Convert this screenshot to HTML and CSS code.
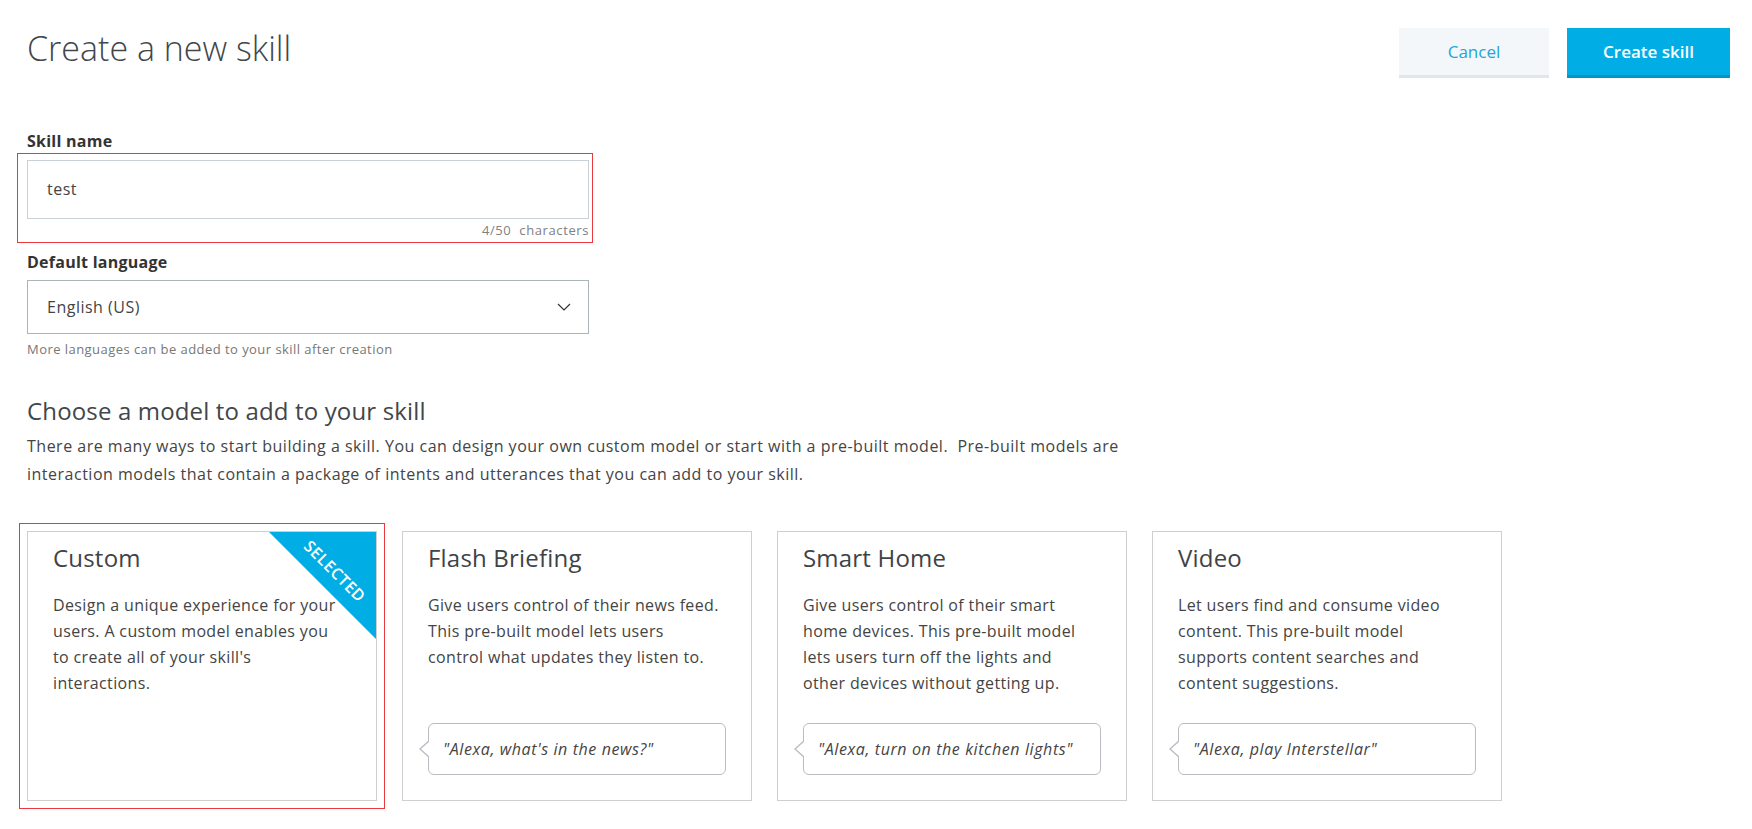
FILE: index.html
```html
<!DOCTYPE html>
<html lang="en">
<head>
<meta charset="utf-8">
<title>Create a new skill</title>
<link rel="stylesheet" href="styles.css">
</head>
<body>
<div class="page">
  <header class="top">
    <h1 class="title">Create a new skill</h1>
    <div class="actions">
      <button class="btn btn-secondary">Cancel</button>
      <button class="btn btn-primary">Create skill</button>
    </div>
  </header>

  <section class="form">
    <div class="label">Skill name</div>
    <div class="highlight">
      <div class="input">test</div>
      <div class="counter">4/50&nbsp; characters</div>
    </div>

    <div class="label label-lang">Default language</div>
    <div class="select">
      <span>English (US)</span>
      <svg class="chevron" width="14" height="8" viewBox="0 0 14 8"><polyline points="1,1 7,7 13,1" fill="none" stroke="#333" stroke-width="1.2"/></svg>
    </div>
    <p class="help">More languages can be added to your skill after creation</p>
  </section>

  <section class="models">
    <h2 class="models-title">Choose a model to add to your skill</h2>
    <p class="intro">There are many ways to start building a skill. You can design your own custom model or start with a pre-built model.&nbsp; Pre-built models are<br>interaction models that contain a package of intents and utterances that you can add to your skill.</p>

    <div class="cards">
      <div class="card card-selected">
        <div class="ribbon"><span>SELECTED</span></div>
        <h3 class="card-title">Custom</h3>
        <p class="card-desc">Design a unique experience for your<br>users. A custom model enables you<br>to create all of your skill's<br>interactions.</p>
      </div>
      <div class="card">
        <h3 class="card-title">Flash Briefing</h3>
        <p class="card-desc">Give users control of their news feed.<br>This pre-built model lets users<br>control what updates they listen to.</p>
        <div class="bubble">"Alexa, what's in the news?"</div>
      </div>
      <div class="card">
        <h3 class="card-title">Smart Home</h3>
        <p class="card-desc">Give users control of their smart<br>home devices. This pre-built model<br>lets users turn off the lights and<br>other devices without getting up.</p>
        <div class="bubble">"Alexa, turn on the kitchen lights"</div>
      </div>
      <div class="card">
        <h3 class="card-title">Video</h3>
        <p class="card-desc">Let users find and consume video<br>content. This pre-built model<br>supports content searches and<br>content suggestions.</p>
        <div class="bubble">"Alexa, play Interstellar"</div>
      </div>
    </div>
  </section>
</div>
</body>
</html>
```

FILE: styles.css
```css
* { box-sizing: border-box; }

html, body {
  margin: 0;
  padding: 0;
  background: #ffffff;
}

body {
  font-family: "Open Sans", "Noto Sans", "Liberation Sans", sans-serif;
  color: #444;
}

.page {
  padding: 28px 22px 28px 27px;
}

.top {
  display: flex;
  justify-content: space-between;
  align-items: flex-start;
  height: 50px;
}

.title {
  margin: 0;
  font-size: 34px;
  font-weight: 300;
  line-height: 40px;
  color: #424649;
}

.actions {
  display: flex;
  gap: 18px;
}

.btn {
  font-family: inherit;
  font-size: 17px;
  height: 50px;
  border: 0;
  border-bottom: 3px solid;
  padding: 0;
  cursor: pointer;
}

.btn-secondary {
  width: 150px;
  background: #f4f7f9;
  border-bottom-color: #dde7ec;
  color: #1ba6da;
  font-weight: 500;
}

.btn-primary {
  width: 163px;
  background: #00aee5;
  border-bottom-color: #0096c6;
  color: #ffffff;
  font-weight: 600;
}

/* form */
.label {
  font-size: 16px;
  font-weight: 700;
  line-height: 20px;
  letter-spacing: 0.25px;
  color: #333;
  margin-top: 53px;
}

.label-lang {
  margin-top: 9px;
}

.highlight {
  width: 576px;
  margin: 2px 0 0 -10px;
  padding: 6px 3px 3px 9px;
  border: 1px solid #e8393f;
}

.input {
  width: 562px;
  height: 59px;
  border: 1px solid #c8d0d8;
  padding: 0 19px;
  font-size: 16px;
  line-height: 57px;
  letter-spacing: 0.5px;
  color: #444;
}

.counter {
  margin-top: 2px;
  text-align: right;
  font-size: 13px;
  line-height: 18px;
  letter-spacing: 0.6px;
  color: #808080;
}

.select {
  width: 562px;
  height: 54px;
  margin-top: 8px;
  border: 1px solid #a9b6b7;
  padding: 0 17px 0 19px;
  display: flex;
  align-items: center;
  justify-content: space-between;
  font-size: 16px;
  letter-spacing: 0.5px;
  color: #444;
}

.help {
  margin: 6px 0 0;
  font-size: 13px;
  line-height: 18px;
  letter-spacing: 0.45px;
  color: #777;
}

/* models */
.models-title {
  margin: 38px 0 0;
  font-size: 24px;
  font-weight: 400;
  line-height: 30px;
  letter-spacing: 0.15px;
  color: #424649;
}

.intro {
  margin: 6px 0 0;
  font-size: 16px;
  line-height: 28px;
  letter-spacing: 0.5px;
  color: #444;
}

.cards {
  display: flex;
  gap: 25px;
  margin-top: 43px;
}

.card {
  position: relative;
  width: 350px;
  height: 270px;
  border: 1px solid #cfcfcf;
  padding: 11px 25px 25px;
  display: flex;
  flex-direction: column;
  background: #fff;
}

.card-selected {
  outline: 1px solid #e8393f;
  outline-offset: 7px;
}

.card-title {
  margin: 0;
  font-size: 24px;
  font-weight: 400;
  line-height: 30px;
  letter-spacing: 0.2px;
  color: #3f4346;
}

.card-desc {
  margin: 19px 0 0;
  font-size: 16px;
  line-height: 26px;
  letter-spacing: 0.35px;
  white-space: nowrap;
  color: #444;
}

.bubble {
  position: relative;
  margin-top: auto;
  height: 52px;
  border: 1px solid #b9bdc1;
  border-radius: 6px;
  padding: 0 14px;
  font-size: 16px;
  font-style: italic;
  line-height: 50px;
  letter-spacing: 0.6px;
  color: #444;
  white-space: nowrap;
}

.bubble::before,
.bubble::after {
  content: "";
  position: absolute;
  top: 50%;
  width: 0;
  height: 0;
  border-style: solid;
  border-color: transparent;
}

.bubble::before {
  left: -10px;
  margin-top: -9px;
  border-width: 9px 10px 9px 0;
  border-right-color: #b9bdc1;
}

.bubble::after {
  left: -8px;
  margin-top: -8px;
  border-width: 8px 9px 8px 0;
  border-right-color: #ffffff;
}

.ribbon {
  position: absolute;
  top: 0;
  right: 0;
  width: 107px;
  height: 107px;
  background: #00aee5;
  clip-path: polygon(0 0, 100% 0, 100% 100%);
}

.ribbon span {
  position: absolute;
  left: 6px;
  top: 29px;
  width: 120px;
  height: 20px;
  line-height: 20px;
  text-align: center;
  transform: rotate(45deg);
  color: #fff;
  font-size: 16px;
  font-weight: 600;
  letter-spacing: 0.5px;
}
```
